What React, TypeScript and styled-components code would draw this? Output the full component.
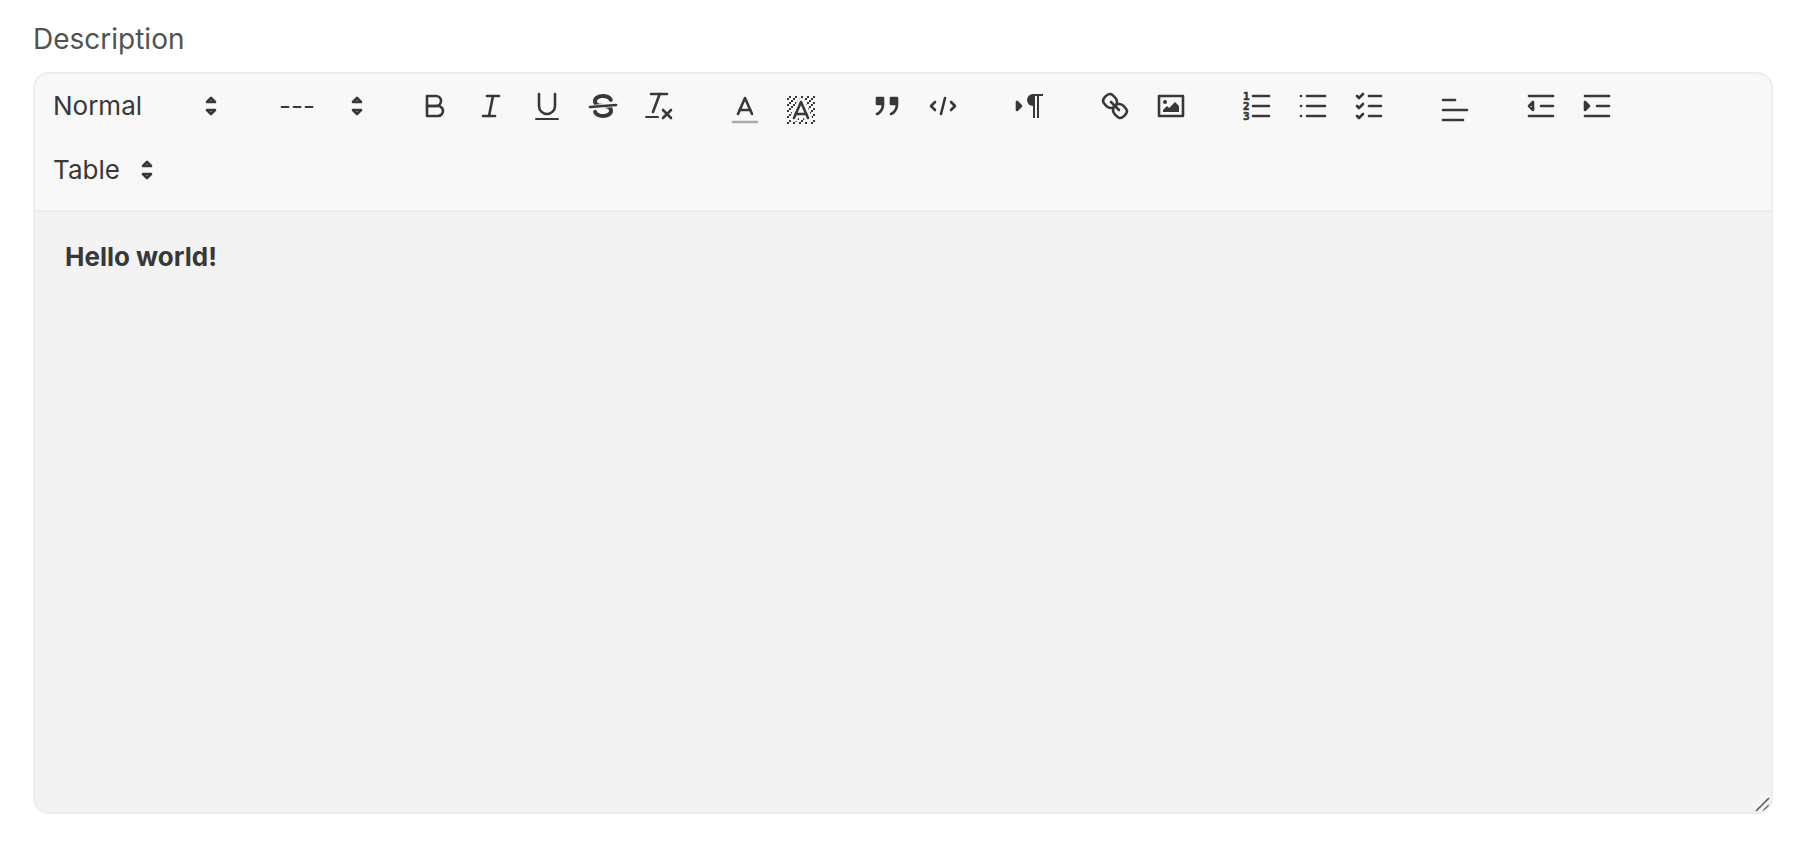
import React from "react";
import styled, { createGlobalStyle } from "styled-components";

const GlobalStyle = createGlobalStyle`
  *, *::before, *::after { box-sizing: border-box; }
  body {
    margin: 0;
    background: #ffffff;
    color: #383838;
    font-family: Inter, "Liberation Sans", sans-serif;
    font-size: 26px;
  }
`;

const Field = styled.main`
  display: flex;
  flex-direction: column;
  gap: 14px;
  padding: 20px 37px 28px 33px;
`;

const FieldLabel = styled.label`
  font-size: 28px;
  line-height: 38px;
  color: #525252;
`;

const Editor = styled.section`
  position: relative;
  display: flex;
  flex-direction: column;
  border: 2px solid #ededed;
  border-radius: 16px;
  background: #f3f3f3;
  overflow: hidden;
`;

const Toolbar = styled.div`
  display: flex;
  flex-wrap: wrap;
  gap: 16px 30px;
  padding: 8px 0 16px;
  background: #f8f8f8;
  border-bottom: 2px solid #ededed;
`;

const Group = styled.div`
  display: flex;
`;

const Picker = styled.label<{ $width: number }>`
  display: grid;
  align-items: center;
  width: ${(p) => p.$width}px;
  height: 48px;

  & > * {
    grid-area: 1 / 1;
  }

  & > svg {
    justify-self: end;
    margin-right: 2px;
    pointer-events: none;
  }
`;

const Select = styled.select`
  appearance: none;
  width: 100%;
  height: 48px;
  padding: 0 36px 2px 18px;
  border: 0;
  background: transparent;
  color: inherit;
  font: inherit;
  cursor: pointer;
`;

const ToolButton = styled.button<{ $dropdown?: boolean }>`
  display: block;
  width: 56px;
  height: 48px;
  padding: ${(p) => (p.$dropdown ? "10px 10px 2px" : "6px 10px")};
  border: 0;
  background: transparent;
  color: inherit;
  cursor: pointer;
`;

const Svg = styled.svg`
  display: block;
  width: 36px;
  height: 36px;
  fill: none;
  stroke: #383838;
  stroke-width: 1.3;
  stroke-linecap: round;
  stroke-linejoin: round;

  .fill {
    fill: #383838;
  }
  .solid {
    fill: #383838;
    stroke: none;
  }
  .faint {
    opacity: 0.4;
  }
`;

const Digit = styled.text`
  fill: #383838;
  stroke-width: 0.6;
  font-family: "DejaVu Sans Mono", monospace;
  font-weight: 700;
  font-size: 11px;
`;

const Content = styled.textarea`
  display: block;
  width: 100%;
  height: 600px;
  padding: 25px 30px;
  border: 0;
  outline: 0;
  resize: none;
  background: transparent;
  color: #383838;
  font: inherit;
  font-weight: 700;
  line-height: 40px;
`;

const ResizeHandle = styled.svg`
  position: absolute;
  right: 0;
  bottom: 0;
  width: 20px;
  height: 20px;
  fill: none;
  stroke: #5c5c5c;
  stroke-width: 1.6;
`;

const Icon = ({ children }: { children: React.ReactNode }) => (
  <Svg viewBox="0 0 18 18" aria-hidden="true">
    {children}
  </Svg>
);

const Chevrons = () => (
  <Icon>
    <polygon points="7 11 9 13 11 11 7 11" />
    <polygon points="7 7 9 5 11 7 7 7" />
  </Icon>
);

const backgroundDots: [number, number][] = [
  [4, 4], [2, 6], [3, 5], [4, 7], [2, 12], [2, 9], [2, 15], [3, 8], [12, 2],
  [11, 3], [2, 3], [6, 2], [3, 2], [5, 3], [9, 2], [15, 14], [13, 7], [15, 5],
  [14, 6], [15, 8], [14, 9], [14, 3], [15, 2], [12, 5], [13, 4], [9, 14],
  [8, 15], [5, 15], [11, 15], [14, 15], [15, 11],
];

type Tool = { name: string; icon: React.ReactNode; dropdown?: boolean };

const groups: Tool[][] = [
  [
    {
      name: "Bold",
      icon: (
        <Icon>
          <path d="M5,4H9.5A2.5,2.5,0,0,1,12,6.5v0A2.5,2.5,0,0,1,9.5,9H5V4Z" />
          <path d="M5,9h5.5A2.5,2.5,0,0,1,13,11.5v0A2.5,2.5,0,0,1,10.5,14H5V9Z" />
        </Icon>
      ),
    },
    {
      name: "Italic",
      icon: (
        <Icon>
          <line x1="7" x2="13" y1="4" y2="4" />
          <line x1="5" x2="11" y1="14" y2="14" />
          <line x1="8" x2="10" y1="14" y2="4" />
        </Icon>
      ),
    },
    {
      name: "Underline",
      icon: (
        <Icon>
          <path d="M5,3V9a4.012,4.012,0,0,0,4,4H9a4.012,4.012,0,0,0,4-4V3" />
          <rect className="solid" height="1" rx="0.5" width="12" x="3" y="15" />
        </Icon>
      ),
    },
    {
      name: "Strikethrough",
      icon: (
        <Icon>
          <line x1="15.5" x2="2.5" y1="8.5" y2="9.5" />
          <path className="solid" d="M9.007,8C6.542,7.791,6,7.519,6,6.5,6,5.792,7.283,5,9,5c1.571,0,2.765.679,2.969,1.309a1,1,0,0,0,1.9-.617C13.356,4.106,11.354,3,9,3,6.2,3,4,4.538,4,6.5a3.2,3.2,0,0,0,.5,1.843Z" />
          <path className="solid" d="M8.984,10C11.457,10.208,12,10.479,12,11.5c0,.708-1.283,1.5-3,1.5-1.571,0-2.765-.679-2.969-1.309a1,1,0,1,0-1.9.617C4.644,13.894,6.646,15,9,15c2.8,0,5-1.538,5-3.5a3.2,3.2,0,0,0-.5-1.843Z" />
        </Icon>
      ),
    },
    {
      name: "Clear formatting",
      icon: (
        <Icon>
          <line x1="5" x2="13" y1="3" y2="3" />
          <line x1="6" x2="9.35" y1="12" y2="3" />
          <line x1="11" x2="15" y1="11" y2="15" />
          <line x1="15" x2="11" y1="11" y2="15" />
          <rect className="solid" height="1" rx="0.5" width="7" x="2" y="14" />
        </Icon>
      ),
    },
  ],
  [
    {
      name: "Text color",
      dropdown: true,
      icon: (
        <Icon>
          <line className="faint" x1="3" x2="15" y1="15" y2="15" />
          <polyline points="5.5 11 9 3 12.5 11" />
          <line x1="11.63" x2="6.38" y1="9" y2="9" />
        </Icon>
      ),
    },
    {
      name: "Background color",
      dropdown: true,
      icon: (
        <Icon>
          <g className="solid">
            {backgroundDots.map(([x, y]) => (
              <rect key={`${x}-${y}`} x={x} y={y} width="1" height="1" />
            ))}
            <polygon points="6 6.868 6 6 5 6 5 7 5.942 7 6 6.868" />
            <polygon points="6.817 5 6 5 6 6 6.38 6 6.817 5" />
            <polygon points="4 11.439 4 11 3 11 3 12 3.755 12 4 11.439" />
            <polygon points="4.63 10 4 10 4 11 4.192 11 4.63 10" />
            <path d="M10.832,4.2L11,4.582V4H10.708A1.948,1.948,0,0,1,10.832,4.2Z" />
            <path d="M7,4.582L7.168,4.2A1.929,1.929,0,0,1,7.292,4H7V4.582Z" />
            <path d="M8,13H7.683l-0.351.8a1.933,1.933,0,0,1-.124.2H8V13Z" />
            <path d="M9,3H8V3.282A1.985,1.985,0,0,1,9,3Z" />
            <polygon points="13.447 10.174 13.469 10.225 13.472 10.232 13.808 11 14 11 14 10 13.37 10 13.447 10.174" />
            <path d="M3.775,14H3v1H4V14.314A1.97,1.97,0,0,1,3.775,14Z" />
            <polygon points="12 6.868 12 6 11.62 6 12 6.868" />
            <polygon points="12.933 9 13 9 13 8 12.495 8 12.933 9" />
            <path d="M6,14.926V15H7V14.316A1.993,1.993,0,0,1,6,14.926Z" />
            <path d="M10.668,13.8L10.317,13H10v1h0.792A1.947,1.947,0,0,1,10.668,13.8Z" />
            <path d="M14.332,12.2a1.99,1.99,0,0,1,.166.8H15V12H14.245Z" />
          </g>
          <polyline points="5.5 13 9 5 12.5 13" />
          <line x1="11.63" x2="6.38" y1="11" y2="11" />
        </Icon>
      ),
    },
  ],
  [
    {
      name: "Blockquote",
      icon: (
        <Icon>
          <rect className="fill" height="3" width="3" x="4" y="5" />
          <rect className="fill" height="3" width="3" x="11" y="5" />
          <path d="M7,8c0,4.031-3,5-3,5" />
          <path d="M14,8c0,4.031-3,5-3,5" />
        </Icon>
      ),
    },
    {
      name: "Code block",
      icon: (
        <Icon>
          <polyline points="5 7 3 9 5 11" />
          <polyline points="13 7 15 9 13 11" />
          <line x1="10" x2="8" y1="5" y2="13" />
        </Icon>
      ),
    },
  ],
  [
    {
      name: "Text direction",
      icon: (
        <Icon>
          <polygon className="fill" points="3 11 5 9 3 7 3 11" />
          <path className="solid" d="M11,3a3,3,0,0,0,0,6h1V3H11Z" />
          <rect className="solid" height="1" width="5" x="11" y="3" />
          <rect className="solid" height="11" width="1" x="11" y="4" />
          <rect className="solid" height="11" width="1" x="13" y="4" />
        </Icon>
      ),
    },
  ],
  [
    {
      name: "Link",
      icon: (
        <Icon>
          <line x1="7" x2="11" y1="7" y2="11" />
          <path d="M8.9,4.577a3.476,3.476,0,0,1,.36,4.679A3.476,3.476,0,0,1,4.577,8.9C3.185,7.5,2.035,6.4,4.217,4.217S7.5,3.185,8.9,4.577Z" />
          <path d="M13.423,9.1a3.476,3.476,0,0,0-4.679-.36,3.476,3.476,0,0,0,.36,4.679c1.392,1.392,2.5,2.542,4.679.36S14.815,10.5,13.423,9.1Z" />
        </Icon>
      ),
    },
    {
      name: "Image",
      icon: (
        <Icon>
          <rect height="10" width="12" x="3" y="4" />
          <circle className="solid" cx="6" cy="7" r="1" />
          <polyline className="solid" points="5 12 5 11 7 9 8 10 11 7 13 9 13 12 5 12" />
        </Icon>
      ),
    },
  ],
  [
    {
      name: "Numbered list",
      icon: (
        <Svg viewBox="0 0 36 36" aria-hidden="true">
          <g transform="scale(2)">
            <line x1="7" x2="15" y1="4" y2="4" />
            <line x1="7" x2="15" y1="9" y2="9" />
            <line x1="7" x2="15" y1="14" y2="14" />
          </g>
          <Digit x="4" y="12">1</Digit>
          <Digit x="4" y="22">2</Digit>
          <Digit x="4" y="32">3</Digit>
        </Svg>
      ),
    },
    {
      name: "Bulleted list",
      icon: (
        <Icon>
          <line x1="6" x2="15" y1="4" y2="4" />
          <line x1="6" x2="15" y1="9" y2="9" />
          <line x1="6" x2="15" y1="14" y2="14" />
          <line x1="3" x2="3" y1="4" y2="4" />
          <line x1="3" x2="3" y1="9" y2="9" />
          <line x1="3" x2="3" y1="14" y2="14" />
        </Icon>
      ),
    },
    {
      name: "Checklist",
      icon: (
        <Icon>
          <line x1="9" x2="15" y1="4" y2="4" />
          <line x1="9" x2="15" y1="9" y2="9" />
          <line x1="9" x2="15" y1="14" y2="14" />
          <polyline points="3 4 4 5 6 3" />
          <polyline points="3 9 4 10 6 8" />
          <polyline points="3 14 4 15 6 13" />
        </Icon>
      ),
    },
  ],
  [
    {
      name: "Align",
      dropdown: true,
      icon: (
        <Icon>
          <line x1="3" x2="9" y1="4" y2="4" />
          <line x1="3" x2="15" y1="9" y2="9" />
          <line x1="3" x2="13" y1="14" y2="14" />
        </Icon>
      ),
    },
  ],
  [
    {
      name: "Decrease indent",
      icon: (
        <Icon>
          <line x1="3" x2="15" y1="14" y2="14" />
          <line x1="3" x2="15" y1="4" y2="4" />
          <line x1="9" x2="15" y1="9" y2="9" />
          <polyline points="5 7 5 11 3 9 5 7" />
        </Icon>
      ),
    },
    {
      name: "Increase indent",
      icon: (
        <Icon>
          <line x1="3" x2="15" y1="14" y2="14" />
          <line x1="3" x2="15" y1="4" y2="4" />
          <line x1="9" x2="15" y1="9" y2="9" />
          <polyline className="fill" points="3 7 3 11 5 9 3 7" />
        </Icon>
      ),
    },
  ],
];

function SelectPicker({ label, value, width }: { label: string; value: string; width: number }) {
  return (
    <Picker $width={width}>
      <Select aria-label={label} defaultValue={value}>
        <option>{value}</option>
      </Select>
      <Chevrons />
    </Picker>
  );
}

export default function App() {
  return (
    <>
      <GlobalStyle />
      <Field>
        <FieldLabel htmlFor="description">Description</FieldLabel>
        <Editor>
          <Toolbar role="toolbar" aria-label="Formatting">
            <SelectPicker label="Text style" value="Normal" width={196} />
            <SelectPicker label="Font size" value="---" width={116} />
            {groups.map((group) => (
              <Group key={group[0].name}>
                {group.map((tool) => (
                  <ToolButton key={tool.name} type="button" aria-label={tool.name} $dropdown={tool.dropdown}>
                    {tool.icon}
                  </ToolButton>
                ))}
              </Group>
            ))}
            <SelectPicker label="Table" value="Table" width={132} />
          </Toolbar>
          <Content id="description" defaultValue="Hello world!" spellCheck={false} />
          <ResizeHandle viewBox="0 0 20 20" aria-hidden="true">
            <path d="M5 19L18 6M12 19L18 13" />
          </ResizeHandle>
        </Editor>
      </Field>
    </>
  );
}
